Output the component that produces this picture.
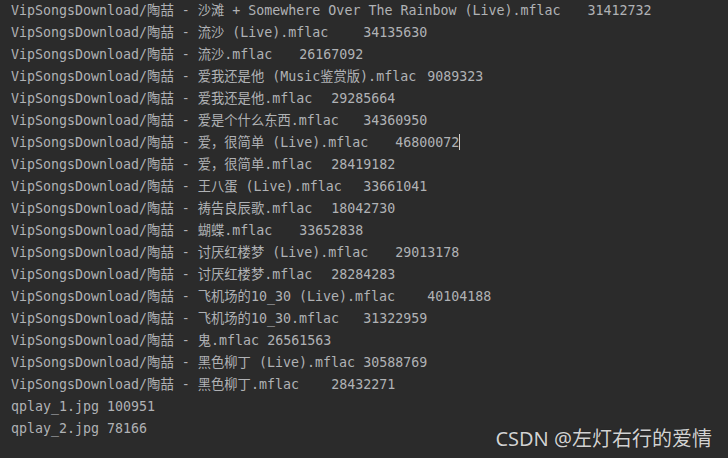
import React from 'react';

const lines: string[] = [
  'VipSongsDownload/陶喆 - 沙滩 + Somewhere Over The Rainbow (Live).mflac\t31412732',
  'VipSongsDownload/陶喆 - 流沙 (Live).mflac\t34135630',
  'VipSongsDownload/陶喆 - 流沙.mflac\t26167092',
  'VipSongsDownload/陶喆 - 爱我还是他 (Music鉴赏版).mflac\t9089323',
  'VipSongsDownload/陶喆 - 爱我还是他.mflac\t29285664',
  'VipSongsDownload/陶喆 - 爱是个什么东西.mflac\t34360950',
  'VipSongsDownload/陶喆 - 爱，很简单 (Live).mflac\t46800072',
  'VipSongsDownload/陶喆 - 爱，很简单.mflac\t28419182',
  'VipSongsDownload/陶喆 - 王八蛋 (Live).mflac\t33661041',
  'VipSongsDownload/陶喆 - 祷告良辰歌.mflac\t18042730',
  'VipSongsDownload/陶喆 - 蝴蝶.mflac\t33652838',
  'VipSongsDownload/陶喆 - 讨厌红楼梦 (Live).mflac\t29013178',
  'VipSongsDownload/陶喆 - 讨厌红楼梦.mflac\t28284283',
  'VipSongsDownload/陶喆 - 飞机场的10_30 (Live).mflac\t40104188',
  'VipSongsDownload/陶喆 - 飞机场的10_30.mflac\t31322959',
  'VipSongsDownload/陶喆 - 鬼.mflac\t26561563',
  'VipSongsDownload/陶喆 - 黑色柳丁 (Live).mflac\t30588769',
  'VipSongsDownload/陶喆 - 黑色柳丁.mflac\t28432271',
  'qplay_1.jpg 100951',
  'qplay_2.jpg 78166',
];

export default function App() {
  return (
    <div className="relative w-[728px] h-[458px] overflow-hidden bg-[#2b2b2b]">
      <div className="pl-[11px] text-[13.3px] leading-[22px] text-[#b0b2b5] whitespace-pre [tab-size:4] font-['DejaVu_Sans_Mono','Noto_Sans_CJK_SC',monospace]">
        {lines.map((line, i) => (
          <div key={i}>
            {line}
            {i === 6 && (
              <span className="inline-block w-px h-[16px] bg-[#d0d0d0] align-[-3px]" />
            )}
          </div>
        ))}
      </div>
      <div className="absolute right-[16px] bottom-[5px] text-[20px] leading-[28px] text-[#d2d2d2] font-['Noto_Sans','Noto_Sans_CJK_SC',sans-serif] [text-shadow:0_0_1px_rgba(0,0,0,0.6)]">
        CSDN @左灯右行的爱情
      </div>
    </div>
  );
}
